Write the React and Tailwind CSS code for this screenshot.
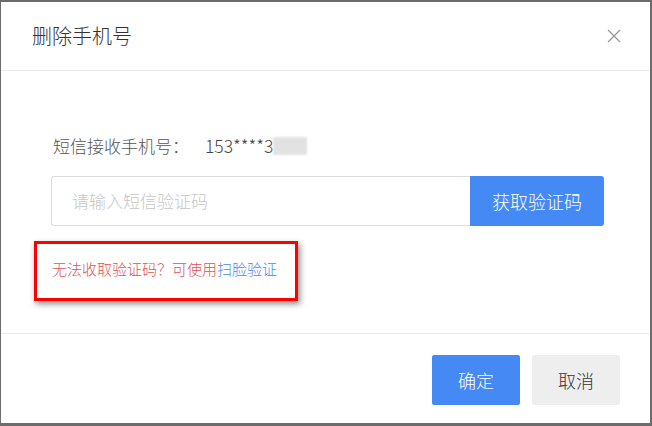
import { useState } from 'react'

const font = { fontFamily: '"Noto Sans CJK SC", "Microsoft YaHei", sans-serif' }

export default function App() {
  const [code, setCode] = useState('')

  return (
    <div className="w-[652px] h-[426px] bg-[#6c6c6c] pt-[2px] pl-[1px] pr-[2px] pb-[3px] font-light" style={font}>
      <div className="h-full bg-white flex flex-col">
        {/* header */}
        <div className="h-[69px] shrink-0 flex items-center justify-between pl-[31px] pr-[28px] border-b border-[#ebebeb]">
          <h2 className="text-[20px] text-[#333] font-light leading-none">删除手机号</h2>
          <button className="text-[#999] w-[16px] h-[16px] flex items-center justify-center">
            <svg width="14" height="14" viewBox="0 0 14 14" fill="none" stroke="currentColor" strokeWidth="1.3">
              <path d="M1 1L13 13M13 1L1 13" />
            </svg>
          </button>
        </div>

        {/* body */}
        <div className="flex-1 pl-[50px] pr-[46px] pt-[63px]">
          <div className="flex items-center h-[24px] text-[17px] text-[#555] pl-[2px]">
            <span>短信接收手机号：</span>
            <span className="ml-[16px] text-[17.5px] text-[#444]">153****3</span>
            <span className="w-[34px] h-[18px] bg-[#e2e2e2] blur-[1px]" />
          </div>

          <div className="flex mt-[18px] h-[50px]">
            <input
              value={code}
              onChange={e => setCode(e.target.value)}
              placeholder="请输入短信验证码"
              className="flex-1 min-w-0 border border-[#dcdcdc] border-r-0 rounded-l-[3px] px-[20px] text-[17px] font-light text-[#333] placeholder:text-[#c6c6c6] outline-none"
            />
            <button className="w-[134px] bg-[#4589f5] text-white text-[18px] font-light rounded-r-[3px]">获取验证码</button>
          </div>

          <div className="relative mt-[33px] h-[20px] text-[15px] leading-[20px] pl-[1px]">
            <span className="text-[#e0514f]">无法收取验证码？可使用</span>
            <a className="text-[#4a8af4] cursor-pointer">扫脸验证</a>
            <div className="absolute left-[-17px] top-[-18px] w-[264px] h-[60px] border-[3px] border-[#ff0000] shadow-[2px_3px_6px_rgba(0,0,0,0.45)] pointer-events-none" />
          </div>
        </div>

        {/* footer */}
        <div className="h-[90px] shrink-0 border-t border-[#ebebeb] flex items-start justify-end gap-[12px] pt-[21px] pr-[30px]">
          <button className="w-[88px] h-[50px] bg-[#4589f5] text-white text-[18px] font-light rounded-[2px]">确定</button>
          <button className="w-[88px] h-[50px] bg-[#eeeeee] text-[#333] text-[18px] font-light rounded-[2px]">取消</button>
        </div>
      </div>
    </div>
  )
}
